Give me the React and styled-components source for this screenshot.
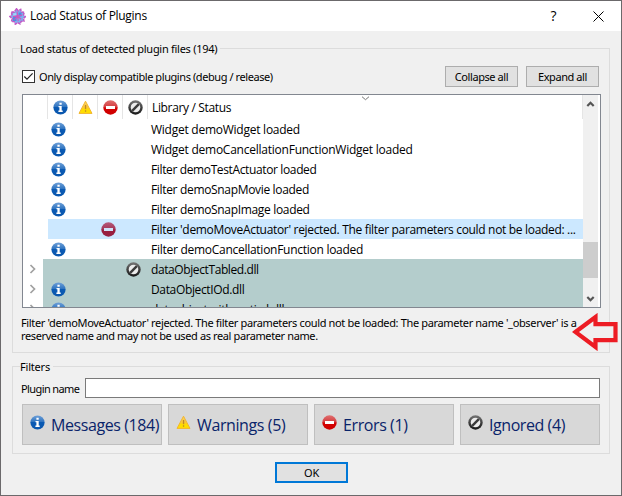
import React, { useId } from "react";
import styled, { createGlobalStyle } from "styled-components";

const Global = createGlobalStyle`
  * { box-sizing: border-box; }
  body { margin: 0; background: #f0f0f0; }
  button { margin: 0; padding: 0; }
`;

const Window = styled.main`
  width: 622px;
  height: 496px;
  border: 1px solid #6b696b;
  background: #f0f0f0;
  overflow: hidden;
  color: #000;
  font: 11px/13px "Noto Sans", "Open Sans", sans-serif;
`;

const TitleBar = styled.header`
  height: 30px;
  background: #fff;
  display: flex;
  align-items: center;
  padding-left: 8px;
`;

const Title = styled.h1`
  margin: 0 auto 0 4px;
  font: 400 12px/16px "Open Sans", sans-serif;
  letter-spacing: ${(p) => p.$spacing}px;
`;

const CaptionButton = styled.button`
  width: 45px;
  height: 29px;
  border: 0;
  background: none;
  display: grid;
  place-items: center;
  font: 14px/16px "Open Sans", sans-serif;
`;

const Label = styled.span`
  white-space: nowrap;
  letter-spacing: ${(p) => p.$spacing || 0}px;
`;

const Group = styled.section`
  margin: ${(p) => p.$top}px 11px 0;
  height: ${(p) => p.$height}px;
  border: 1px solid #dcdcdc;
  padding: 0 9px;
  display: flex;
  flex-direction: column;
`;

const Legend = styled.h2`
  align-self: flex-start;
  margin: -7px 0 0 -2px;
  padding-right: 3px;
  height: 14px;
  background: #f0f0f0;
  font: inherit;
  white-space: nowrap;
  letter-spacing: ${(p) => p.$spacing}px;
`;

const Toolbar = styled.div`
  margin-top: 9px;
  padding-right: 1px;
  height: 22px;
  display: flex;
  align-items: center;
`;

const CheckLabel = styled.label`
  display: flex;
  align-items: center;
  gap: 4px;
  margin-right: auto;
`;

const CheckBox = styled.span`
  width: 13px;
  height: 13px;
  border: 1px solid #333;
  background: #fff;
  display: grid;
  place-items: center;
`;

const PushButton = styled.button`
  width: 73px;
  height: 21px;
  margin-left: ${(p) => (p.$primary ? 274 : 8)}px;
  margin-top: ${(p) => (p.$primary ? 8 : 0)}px;
  border: ${(p) => (p.$primary ? "2px solid #0078d7" : "1px solid #adadad")};
  background: #e1e1e1;
  font: inherit;
  letter-spacing: ${(p) => p.$spacing || 0}px;
`;

const Tree = styled.div`
  margin-top: 7px;
  width: 579px;
  height: 214px;
  flex: none;
  border: 1px solid #828790;
  background: #fff;
  display: flex;
  overflow: hidden;
  font: 12px/18px "Open Sans", sans-serif;
`;

const TreeBody = styled.div`
  width: 560px;
  height: 212px;
  overflow: hidden;
`;

const HeaderRow = styled.div`
  height: 24px;
  display: grid;
  grid-template-columns: repeat(5, 25px) 1fr;
`;

const HeaderCell = styled.div`
  position: relative;
  border-right: 1px solid #e5e5e5;
  display: flex;
  align-items: center;
  justify-content: ${(p) => (p.$text ? "flex-start" : "center")};
  padding-top: ${(p) => (p.$text ? 2 : 1)}px;
  padding-left: ${(p) => (p.$text ? 4 : 0)}px;
`;

const SortMark = styled.svg`
  position: absolute;
  left: 213px;
  top: 1px;
`;

const Row = styled.div`
  height: 20px;
  display: grid;
  grid-template-columns: 24px repeat(4, 25px) 1fr;
  background: ${(p) => {
    if (p.$selected) return "linear-gradient(90deg, #fff 25px, #cce8ff 25px)";
    if (p.$library) return "linear-gradient(90deg, #fff 20px, #b4cdcc 20px)";
    return "#fff";
  }};
`;

const Cell = styled.div`
  display: flex;
  align-items: center;
  justify-content: center;
  padding-right: 2px;
`;

const ToggleCell = styled(Cell)`
  justify-content: flex-start;
  padding-left: 6px;
`;

const TextCell = styled.div`
  padding: 2px 0 0 4px;
  white-space: nowrap;
  letter-spacing: ${(p) => p.$spacing}px;
`;

const ScrollBar = styled.div`
  width: 15px;
  height: 212px;
  background: #f0f0f0;
  display: flex;
  flex-direction: column;
  align-items: center;
  justify-content: space-between;
`;

const Thumb = styled.div`
  width: 15px;
  height: 36px;
  margin-top: 117px;
  background: #cdcdcd;
`;

const Details = styled.p`
  margin: 8px 0 0 -1px;
  display: flex;
  flex-direction: column;
`;

const FieldRow = styled.div`
  display: flex;
  align-items: center;
  margin-top: 4px;
  height: 20px;
`;

const FieldName = styled(Label)`
  width: 64px;
  margin-left: -1px;
`;

const Input = styled.input`
  width: 515px;
  height: 20px;
  padding: 0 4px;
  border: 1px solid #7a7a7a;
  background: #fff;
  font: inherit;
  outline: none;
`;

const FilterRow = styled.div`
  display: grid;
  grid-template-columns: repeat(4, 140px);
  gap: 6px;
  margin-top: 6px;
`;

const FilterButton = styled.button`
  height: 41px;
  border: 1px solid #bfbfbf;
  background: #d8d8d8;
  color: #0a246a;
  display: flex;
  padding: 10px 2px 0 7px;
  gap: 6px;
  font: 16px/21px "Open Sans", sans-serif;
  text-align: left;
`;

const FilterText = styled.span`
  white-space: nowrap;
  letter-spacing: ${(p) => p.$spacing}px;
`;

const CalloutArrow = styled.svg`
  position: absolute;
  left: 572px;
  top: 313px;
`;

const Icon = styled.svg`
  display: block;
  flex: none;
`;

function InfoIcon() {
  const id = useId();
  return (
    <Icon width="15" height="15" viewBox="0 0 15 15">
      <defs>
        <linearGradient id={id} x1="0" y1="0" x2="0" y2="1">
          <stop offset="0" stopColor="#6fa0d8" />
          <stop offset=".45" stopColor="#2f74c0" />
          <stop offset=".5" stopColor="#0a5ab4" />
          <stop offset="1" stopColor="#0b57ad" />
        </linearGradient>
      </defs>
      <circle cx="7.5" cy="7.5" r="7.1" fill={`url(#${id})`} />
      <path d="M6.4 2.8h2.3v2H6.4zM5.5 6h3.2v4.6h1v1.3H5.4v-1.3h1V7.3h-.9z" fill="#fff" />
    </Icon>
  );
}

function WarningIcon() {
  const id = useId();
  return (
    <Icon width="15" height="15" viewBox="0 0 15 15">
      <defs>
        <linearGradient id={id} x1="0" y1="0" x2="0" y2="1">
          <stop offset="0" stopColor="#fbd36b" />
          <stop offset=".55" stopColor="#fbc732" />
          <stop offset=".65" stopColor="#ffdc00" />
          <stop offset="1" stopColor="#ffe000" />
        </linearGradient>
      </defs>
      <path d="M7.5 1.2 14 13.4H1z" fill={`url(#${id})`} stroke="#f2b630" strokeWidth="1" strokeLinejoin="round" />
      <path d="M6.9 5h1.3v4.2H6.9zM6.9 10.3h1.3v1.4H6.9z" fill="#c08a28" />
    </Icon>
  );
}

function ErrorIcon({ tinted }) {
  const id = useId();
  return (
    <Icon width="15" height="15" viewBox="0 0 15 15">
      <defs>
        <linearGradient id={id} x1="0" y1="0" x2="0" y2="1">
          <stop offset="0" stopColor={tinted ? "#b55a7a" : "#e07070"} />
          <stop offset=".48" stopColor={tinted ? "#a33658" : "#d33b3e"} />
          <stop offset=".52" stopColor={tinted ? "#991d3d" : "#d40000"} />
          <stop offset="1" stopColor={tinted ? "#982244" : "#cf0000"} />
        </linearGradient>
      </defs>
      <circle cx="7.5" cy="7.5" r="7.2" fill={`url(#${id})`} />
      <rect x="3" y="6" width="9" height="3" fill={tinted ? "#cfe2f8" : "#fff"} />
    </Icon>
  );
}

function IgnoredIcon() {
  const id = useId();
  return (
    <Icon width="15" height="15" viewBox="0 0 15 15">
      <defs>
        <linearGradient id={id} x1="0" y1="0" x2="0" y2="1">
          <stop offset="0" stopColor="#777" />
          <stop offset=".5" stopColor="#414141" />
          <stop offset="1" stopColor="#171717" />
        </linearGradient>
      </defs>
      <circle cx="7.5" cy="7.5" r="7.2" fill={`url(#${id})`} />
      <circle cx="7.5" cy="7.5" r="4.8" fill="#ececec" />
      <path d="m4.2 10.8 6.6-6.6" stroke="#3a3a3a" strokeWidth="2.4" />
    </Icon>
  );
}

const icons = { info: InfoIcon, warning: WarningIcon, error: ErrorIcon, ignored: IgnoredIcon };
const kinds = ["info", "warning", "error", "ignored"];

function Logo() {
  return (
    <Icon width="17" height="17" viewBox="0 0 17 17">
      <path
        d="m7.5.8 1.8 2 2.4-1.4.6 2.6 3 .2-.9 2.6 2 1.9-2 1.6.6 2.8-2.8.2-1.2 2.6-2.3-1.3-2.4 1.6-1-2.7-2.8-.1.7-2.8L.9 8.5l2.1-2-.8-2.6 3 .2z"
        fill="#7fb0ee"
        stroke="#c25ac6"
        strokeWidth="1.5"
        strokeDasharray="3.2 .7"
      />
      <path d="M9.5 4.5h3v4h-3zM4 9h3.5v4H4z" fill="#4f8de0" />
      <path d="M4.3 5.2h3v2.6h-3z" fill="#9ad8fa" />
      <path d="m8 3.5.7 4.2L4 8.6M8.7 8l4.3-.8M8.6 8l.6 5M8.5 8.5l-3 3.2M9 8.5l3.2 2.7" fill="none" stroke="#cf55bd" strokeWidth="1.2" />
    </Icon>
  );
}

function Chevron({ up }) {
  return (
    <Icon width="15" height="16" viewBox="0 0 15 16">
      <path d={up ? "m4.3 11 3.2-3.2L10.7 11" : "m4.3 6 3.2 3.2L10.7 6"} fill="none" stroke="#555" strokeWidth="2.2" />
    </Icon>
  );
}

const rows = [
  { kind: "info", text: "Widget demoWidget loaded", spacing: -0.25 },
  { kind: "info", text: "Widget demoCancellationFunctionWidget loaded", spacing: -0.24 },
  { kind: "info", text: "Filter demoTestActuator loaded", spacing: -0.37 },
  { kind: "info", text: "Filter demoSnapMovie loaded", spacing: -0.33 },
  { kind: "info", text: "Filter demoSnapImage loaded", spacing: -0.33 },
  { kind: "error", text: "Filter 'demoMoveActuator' rejected. The filter parameters could not be loaded: ...", selected: true, spacing: -0.32 },
  { kind: "info", text: "Filter demoCancellationFunction loaded", spacing: -0.27 },
  { kind: "ignored", text: "dataObjectTabled.dll", library: true, spacing: -0.4 },
  { kind: "info", text: "DataObjectIOd.dll", library: true, spacing: -0.35 },
  { kind: "info", text: "dataobjectarithmeticd.dll", library: true, spacing: -0.28 },
];

const filters = [
  { kind: "info", text: "Messages (184)", spacing: -0.42 },
  { kind: "warning", text: "Warnings (5)", spacing: -0.39 },
  { kind: "error", text: "Errors (1)", spacing: -0.4 },
  { kind: "ignored", text: "Ignored (4)", spacing: -0.43 },
];

function StatusIcon({ kind, tinted }) {
  const Drawing = icons[kind];
  return <Drawing tinted={tinted} />;
}

function PluginTree() {
  return (
    <Tree>
      <TreeBody>
        <HeaderRow>
          <HeaderCell />
          {kinds.map((k) => (
            <HeaderCell key={k}><StatusIcon kind={k} /></HeaderCell>
          ))}
          <HeaderCell $text>
            <Label $spacing={-0.35}>Library / Status</Label>
            <SortMark width="9" height="5" viewBox="0 0 9 5">
              <path d="m1 .7 3.5 3L8 .7" fill="none" stroke="#777" />
            </SortMark>
          </HeaderCell>
        </HeaderRow>
        {rows.map((r) => (
          <Row key={r.text} $selected={r.selected} $library={r.library}>
            <ToggleCell>
              {r.library && (
                <Icon width="8" height="10" viewBox="0 0 8 10">
                  <path d="m1.5 1 4 4-4 4" fill="none" stroke="#a0a0a0" strokeWidth="1.7" />
                </Icon>
              )}
            </ToggleCell>
            {kinds.map((k) => (
              <Cell key={k}>{k === r.kind && <StatusIcon kind={k} tinted={r.selected} />}</Cell>
            ))}
            <TextCell $spacing={r.spacing}>{r.text}</TextCell>
          </Row>
        ))}
      </TreeBody>
      <ScrollBar>
        <Chevron up />
        <Thumb />
        <Chevron />
      </ScrollBar>
    </Tree>
  );
}

export default function App() {
  return (
    <>
      <Global />
      <Window>
        <TitleBar>
          <Logo />
          <Title $spacing={-0.29}>Load Status of Plugins</Title>
          <CaptionButton>?</CaptionButton>
          <CaptionButton>
            <Icon width="11" height="11" viewBox="0 0 11 11">
              <path d="m.5.5 10 10m0-10-10 10" stroke="#000" />
            </Icon>
          </CaptionButton>
        </TitleBar>
        <Group $top={17} $height={305}>
          <Legend $spacing={-0.28}>Load status of detected plugin files (194)</Legend>
          <Toolbar>
            <CheckLabel>
              <CheckBox>
                <Icon width="11" height="11" viewBox="0 0 11 11">
                  <path d="m1.3 5.5 2.7 2.7 5.6-5.8" fill="none" stroke="#222" strokeWidth="1.2" />
                </Icon>
              </CheckBox>
              <Label $spacing={-0.42}>Only display compatible plugins (debug / release)</Label>
            </CheckLabel>
            <PushButton $spacing={-0.42}>Collapse all</PushButton>
            <PushButton $spacing={-0.42}>Expand all</PushButton>
          </Toolbar>
          <PluginTree />
          <Details>
            <Label $spacing={-0.345}>Filter 'demoMoveActuator' rejected. The filter parameters could not be loaded: The parameter name '_observer' is a</Label>
            <Label $spacing={-0.38}>reserved name and may not be used as real parameter name.</Label>
          </Details>
        </Group>
        <Group $top={13} $height={88}>
          <Legend $spacing={-0.2}>Filters</Legend>
          <FieldRow>
            <FieldName $spacing={-0.6}>Plugin name</FieldName>
            <Input aria-label="Plugin name" />
          </FieldRow>
          <FilterRow>
            {filters.map((f) => (
              <FilterButton key={f.text}>
                <StatusIcon kind={f.kind} />
                <FilterText $spacing={f.spacing}>{f.text}</FilterText>
              </FilterButton>
            ))}
          </FilterRow>
        </Group>
        <PushButton $primary $spacing={-0.3}>OK</PushButton>
        <CalloutArrow width="47" height="38" viewBox="0 0 47 38">
          <path d="M3.4 19 23.5 4v7.2h20v16h-20V34z" fill="#f0f0f0" stroke="#ed1c24" strokeWidth="4.2" />
        </CalloutArrow>
      </Window>
    </>
  );
}
